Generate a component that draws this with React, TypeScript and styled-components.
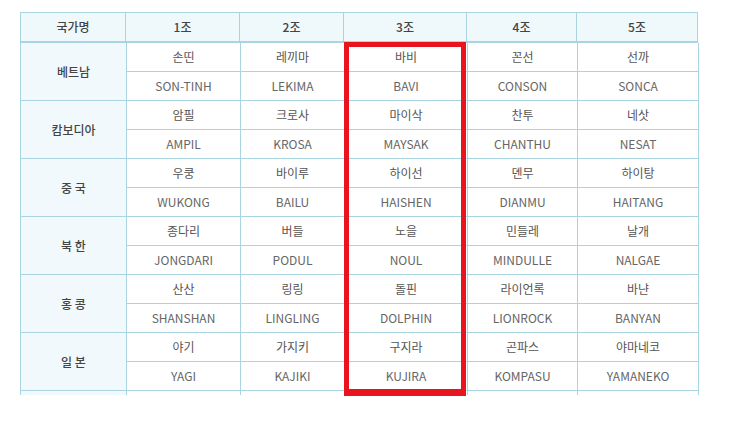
import React from 'react';
import styled, { createGlobalStyle } from 'styled-components';

const GlobalStyle = createGlobalStyle`
  html, body {
    margin: 0;
    padding: 0;
    background: #fff;
  }
  body {
    font-family: "Noto Sans CJK KR", "Noto Sans", sans-serif;
  }
`;

const LINE = '#a9d4e1';

const Page = styled.div`
  position: relative;
  padding: 12px 0 0 20px;
  width: 748px;
  height: 423px;
  box-sizing: border-box;
`;

const Table = styled.table`
  border-collapse: separate;
  border-spacing: 0;
  table-layout: fixed;
  border-left: 1px solid ${LINE};
  font-size: 12px;
  text-align: center;
`;

const HeadTable = styled(Table)`
  border-top: 1px solid ${LINE};
`;

const HeadCell = styled.th`
  padding: 0;
  height: 28px;
  line-height: 28px;
  background: #eff8fb;
  border-right: 1px solid ${LINE};
  border-bottom: 2px solid ${LINE};
  color: #444;
  font-weight: 500;
  box-sizing: border-box;
`;

const BodyScroll = styled.div`
  height: 352px;
  overflow: hidden;
`;

const Cell = styled.td<{ $latin?: boolean }>`
  padding: 0;
  height: 28px;
  line-height: 28px;
  border-right: 1px solid ${LINE};
  border-bottom: 1px solid ${LINE};
  color: ${p => (p.$latin ? '#666' : '#555')};
  white-space: nowrap;
`;

const Country = styled.td`
  padding: 0;
  background: #f1f9fc;
  border-right: 1px solid ${LINE};
  border-bottom: 1px solid ${LINE};
  color: #444;
  font-weight: 500;
`;

const Highlight = styled.div`
  position: absolute;
  left: 344px;
  top: 42px;
  width: 122px;
  height: 354px;
  box-sizing: border-box;
  border: 5px solid #e8151f;
  border-bottom-width: 7px;
  pointer-events: none;
`;

const headWidths = [105, 114, 104, 123, 110, 121];
const bodyWidths = [106, 114, 104, 123, 110, 121];

const headers = ['국가명', '1조', '2조', '3조', '4조', '5조'];

interface Group {
  country: string;
  ko: string[];
  en: string[];
}

const groups: Group[] = [
  { country: '베트남', ko: ['손띤', '레끼마', '바비', '꼰선', '선까'], en: ['SON-TINH', 'LEKIMA', 'BAVI', 'CONSON', 'SONCA'] },
  { country: '캄보디아', ko: ['암필', '크로사', '마이삭', '찬투', '네삿'], en: ['AMPIL', 'KROSA', 'MAYSAK', 'CHANTHU', 'NESAT'] },
  { country: '중 국', ko: ['우쿵', '바이루', '하이선', '뎬무', '하이탕'], en: ['WUKONG', 'BAILU', 'HAISHEN', 'DIANMU', 'HAITANG'] },
  { country: '북 한', ko: ['종다리', '버들', '노을', '민들레', '날개'], en: ['JONGDARI', 'PODUL', 'NOUL', 'MINDULLE', 'NALGAE'] },
  { country: '홍 콩', ko: ['산산', '링링', '돌핀', '라이언록', '바냔'], en: ['SHANSHAN', 'LINGLING', 'DOLPHIN', 'LIONROCK', 'BANYAN'] },
  { country: '일 본', ko: ['야기', '가지키', '구지라', '곤파스', '야마네코'], en: ['YAGI', 'KAJIKI', 'KUJIRA', 'KOMPASU', 'YAMANEKO'] },
];

export default function App() {
  return (
    <Page>
      <GlobalStyle />
      <HeadTable>
        <colgroup>
          {headWidths.map((w, i) => (
            <col key={i} style={{ width: w }} />
          ))}
        </colgroup>
        <thead>
          <tr>
            {headers.map(h => (
              <HeadCell key={h}>{h}</HeadCell>
            ))}
          </tr>
        </thead>
      </HeadTable>
      <BodyScroll>
        <Table>
          <colgroup>
            {bodyWidths.map((w, i) => (
              <col key={i} style={{ width: w }} />
            ))}
          </colgroup>
          <tbody>
            {groups.map(g => (
              <React.Fragment key={g.country}>
                <tr>
                  <Country rowSpan={2}>{g.country}</Country>
                  {g.ko.map(n => (
                    <Cell key={n}>{n}</Cell>
                  ))}
                </tr>
                <tr>
                  {g.en.map(n => (
                    <Cell key={n} $latin>
                      {n}
                    </Cell>
                  ))}
                </tr>
              </React.Fragment>
            ))}
            {/* next group, scrolled out of view */}
            <tr>
              <Country rowSpan={2} />
              {[0, 1, 2, 3, 4].map(i => (
                <Cell key={i} />
              ))}
            </tr>
          </tbody>
        </Table>
      </BodyScroll>
      <Highlight />
    </Page>
  );
}
